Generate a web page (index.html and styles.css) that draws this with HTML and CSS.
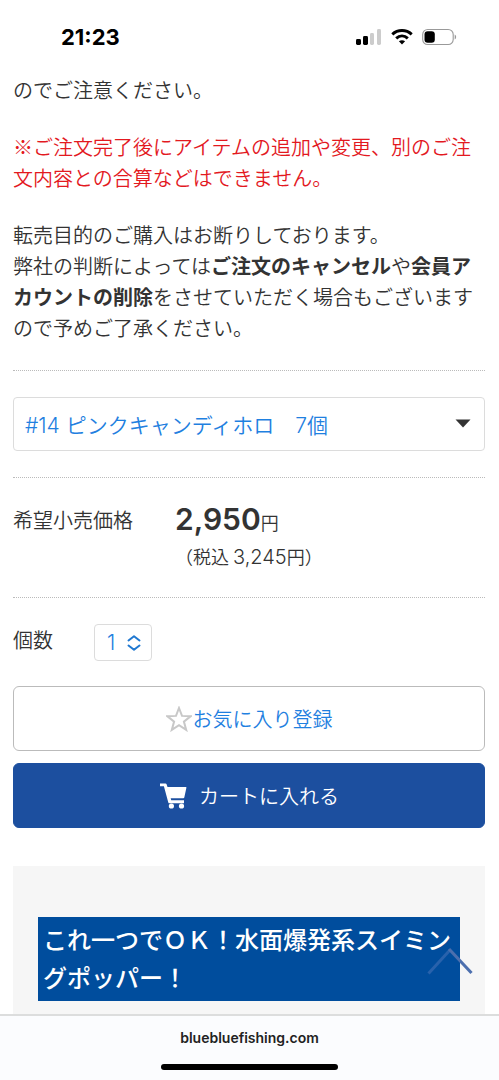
FILE: index.html
```html
<!DOCTYPE html>
<html lang="ja">
<head>
<meta charset="utf-8">
<meta name="viewport" content="width=device-width, initial-scale=1">
<title>bluebluefishing.com</title>
<link rel="stylesheet" href="styles.css">
</head>
<body>
<div class="screen">
  <header class="status-bar">
    <span class="clock">21:23</span>
    <div class="status-icons">
      <svg width="26" height="16" viewBox="0 0 26 16" aria-hidden="true">
        <rect x="0" y="10" width="5" height="6" rx="1.4" fill="#000"/>
        <rect x="7" y="7" width="5" height="9" rx="1.4" fill="#000"/>
        <rect x="14" y="4" width="4" height="12" rx="1.4" fill="#ccc"/>
        <rect x="21" y="0" width="4" height="16" rx="1.4" fill="#ccc"/>
      </svg>
      <svg width="22" height="16" viewBox="0 0 22 16" fill="none" stroke="#000" stroke-width="3" aria-hidden="true">
        <path d="M1.300 5.300C6.800 .3 15.200 .3 20.700 5.300"/>
        <path d="M5.200 9.300C8.600 6.200 13.400 6.200 16.800 9.300"/>
        <path d="M11 15.500 7.900 12.300C9.700 10.800 12.300 10.800 14.100 12.300Z" fill="#000" stroke="none"/>
      </svg>
      <svg width="35" height="18" viewBox="0 0 35 18" aria-hidden="true">
        <rect x=".7" y="1.500" width="30.500" height="15" rx="5" fill="none" stroke="#999" stroke-width="1.100"/>
        <rect x="2.500" y="3.300" width="10.300" height="11.400" rx="3.200" fill="#000"/>
        <path d="M32.700 6.500C34.600 7.300 34.600 10.700 32.700 11.500Z" fill="#999"/>
      </svg>
    </div>
  </header>

  <main class="product">
    <section class="notes">
      <p>のでご注意ください。</p>
      <p class="warning">※ご注文完了後にアイテムの追加や変更、別のご注文内容との合算などはできません。</p>
      <p>転売目的のご購入はお断りしております。<br>弊社の判断によっては<strong>ご注文のキャンセル</strong>や<strong>会員アカウントの削除</strong>をさせていただく場合もございますので予めご了承ください。</p>
    </section>

    <div class="row variant">
      <select class="variant-select" aria-label="カラー">
        <option>#14 ピンクキャンディホロ　7個</option>
      </select>
      <svg class="caret" width="16" height="9" viewBox="0 0 16 9" aria-hidden="true"><path d="M.5.5h15L8 8.500Z" fill="#333"/></svg>
    </div>

    <dl class="row price">
      <dt>希望小売価格</dt>
      <dd>
        <div class="amount"><span class="number">2,950</span>円</div>
        <div class="taxed">（税込 <span class="number">3,245</span>円）</div>
      </dd>
    </dl>

    <form class="row order">
      <div class="quantity">
        <label for="quantity">個数</label>
        <div class="quantity-box">
          <select id="quantity" class="quantity-select"><option>1</option></select>
          <svg class="stepper" width="14" height="16" viewBox="0 0 14 16" fill="none" stroke="#1f78d1" stroke-width="2" stroke-linecap="round" stroke-linejoin="round" aria-hidden="true"><path d="M1.500 5.500 7 1.300l5.500 4.200M1.500 10.500 7 14.700l5.500-4.200"/></svg>
        </div>
      </div>
      <button type="button" class="button favorite">
        <svg width="26" height="26" viewBox="0 0 26 26" fill="none" stroke="#c8c8c8" stroke-width="2" aria-hidden="true"><path d="M13 2 16 9.900 24.500 10.300 17.900 15.600 20.200 23.900 13 19.200 5.800 23.900 8.100 15.600 1.500 10.300 10 9.900Z"/></svg>
        <span>お気に入り登録</span>
      </button>
      <button type="button" class="button cart">
        <svg width="28" height="26" viewBox="0 0 28 26" fill="#fff" aria-hidden="true"><path d="M1 .5H6.500Q7.300.5 7.600 1.300L8.500 4H27Q27.500 4 27.400 4.700L25.300 14.500Q25.100 15.300 24.300 15.300H11.700L12.200 17.300H25V20.300H10.500Q9.600 20.300 9.300 19.400L4.900 3.300H1Z"/><circle cx="12.400" cy="23" r="2.600"/><circle cx="22.500" cy="23" r="2.600"/></svg>
        <span>カートに入れる</span>
      </button>
    </form>

    <section class="description">
      <h2 class="headline">これ一つでＯＫ！水面爆発系スイミングポッパー！</h2>
    </section>
  </main>

  <a class="to-top" href="#" aria-label="ページの先頭へ">
    <svg width="46" height="28" viewBox="0 0 46 28" fill="none" stroke-width="3" aria-hidden="true"><path class="arm-left" d="M1.500 26.500 23 3"/><path class="arm-right" d="M22 2 44.500 26"/></svg>
  </a>

  <footer class="browser-bar">
    <span class="domain">bluebluefishing.com</span>
    <span class="home-indicator"></span>
  </footer>
</div>
</body>
</html>
```
FILE: styles.css
```css
* {
  box-sizing: border-box;
}

body {
  margin: 0;
  background: #fff;
  color: #333;
  font-family: "Noto Sans CJK JP", sans-serif;
  font-size: 20px;
  font-weight: 350;
  line-height: 31px;
}

.screen {
  position: relative;
  display: flex;
  flex-direction: column;
  height: 100vh;
  overflow: hidden;
}

.status-bar {
  display: flex;
  flex: none;
  align-items: center;
  justify-content: space-between;
  height: 74px;
  padding: 0 42px 0 61px;
  color: #000;
}

.clock {
  font-family: Inter, sans-serif;
  font-size: 22px;
  font-weight: 700;
}

.status-icons {
  display: flex;
  align-items: center;
  gap: 9px;
}

.product {
  flex: 1;
  min-height: 0;
  overflow: hidden;
  padding: 0 14px 0 13px;
}

.notes {
  display: flex;
  flex-direction: column;
  gap: 26px;
  padding-bottom: 27px;
}

.notes p {
  margin: 0;
}

.notes strong {
  font-weight: 700;
}

.notes .warning {
  color: #e3191f;
}

.row {
  margin: 0;
  padding: 26px 0;
  border-top: 1px dotted #bbb;
}

.variant {
  position: relative;
  display: flex;
}

select {
  appearance: none;
  border: 1px solid #dcdcdc;
  border-radius: 4px;
  background: #fff;
  color: #1f80e0;
  font-family: Inter, "Noto Sans CJK JP", sans-serif;
  font-size: 21px;
  font-weight: 350;
}

.variant-select {
  width: 100%;
  height: 54px;
  padding: 2px 40px 0 11px;
}

.caret {
  position: absolute;
  right: 14px;
  top: 48px;
  pointer-events: none;
}

.price {
  display: flex;
  gap: 42px;
  padding-bottom: 24px;
}

.price dd {
  margin: 0;
}

.number {
  font-family: Inter, sans-serif;
  font-size: 20px;
}

.amount,
.taxed {
  font-size: 18px;
}

.taxed {
  padding-top: 3px;
}

.amount .number {
  font-size: 30px;
  font-weight: 600;
}

.quantity {
  display: flex;
  gap: 41px;
}

.quantity-box {
  position: relative;
  display: flex;
}

.quantity-select {
  width: 58px;
  height: 37px;
  padding: 0 28px 0 12px;
}

.stepper {
  position: absolute;
  right: 11px;
  top: 11px;
  pointer-events: none;
}

.button {
  display: flex;
  align-items: center;
  justify-content: center;
  width: 100%;
  height: 65px;
  border: 1px solid #bbb;
  border-radius: 6px;
  font: inherit;
}

.favorite {
  margin-top: 25px;
  gap: 1px;
  background: #fff;
  color: #1f80e0;
}

.cart {
  margin-top: 12px;
  gap: 12px;
  border-color: #1c4f9f;
  background: #1c4f9f;
  color: #fff;
}

.description {
  margin-top: 12px;
  padding: 51px 25px;
  background: #f6f6f6;
}

.headline {
  margin: 0;
  padding: 3px 5px 5px;
  background: #004d9d;
  color: #fff;
  font-size: 24px;
  font-weight: 500;
  line-height: 38px;
}

.to-top {
  position: absolute;
  right: 26px;
  bottom: 105px;
  display: flex;
}

.arm-left {
  stroke: #2862ac;
}

.arm-right {
  stroke: #4c6fae;
}

.browser-bar {
  display: flex;
  flex: none;
  flex-direction: column;
  align-items: center;
  gap: 11px;
  padding: 6px 0 10px;
  border-top: 2px solid #dcdddd;
  background: #fbfcfe;
}

.domain {
  color: #222;
  font-family: Inter, sans-serif;
  font-size: 14px;
  font-weight: 600;
}

.home-indicator {
  width: 177px;
  height: 6px;
  border-radius: 3px;
  background: #000;
}
```
